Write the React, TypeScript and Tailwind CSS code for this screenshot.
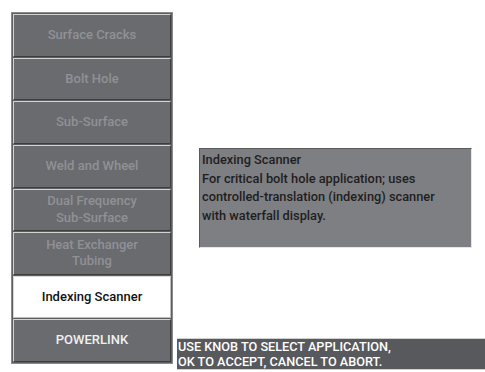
import React from 'react';

interface AppItem {
  label: string[];
  state: 'disabled' | 'selected' | 'enabled';
}

const items: AppItem[] = [
  { label: ['Surface Cracks'], state: 'disabled' },
  { label: ['Bolt Hole'], state: 'disabled' },
  { label: ['Sub-Surface'], state: 'disabled' },
  { label: ['Weld and Wheel'], state: 'disabled' },
  { label: ['Dual Frequency', 'Sub-Surface'], state: 'disabled' },
  { label: ['Heat Exchanger', 'Tubing'], state: 'disabled' },
  { label: ['Indexing Scanner'], state: 'selected' },
  { label: ['POWERLINK'], state: 'enabled' },
];

const font = { fontFamily: 'Roboto, "Liberation Sans", sans-serif' };

const App = () => {
  return (
    <div className="flex w-[485px] h-[372px] bg-white overflow-hidden" style={font}>
      {/* Liste des applications */}
      <div className="ml-[11px] mt-[12px] mb-[8px] w-[162px] flex flex-col gap-[1px] bg-[#5d5e62] border border-[#8a8a8a] p-[1px]">
        {items.map((item, i) => {
          const base = 'flex-1 flex flex-col items-center justify-center border-t border-l leading-[16.5px] text-[13px] font-medium';
          const look =
            item.state === 'selected'
              ? 'bg-white text-[#111] border-[#d8d8d8] border-r border-b border-r-[#bdbdbd] border-b-[#bdbdbd]'
              : item.state === 'enabled'
                ? 'bg-[#6a6b6f] text-[#f0f0f0] border-[#d4d4d4] border-r border-b border-r-[#3e3e3e] border-b-[#3e3e3e]'
                : 'bg-[#6a6b6f] text-[#909195] border-[#d4d4d4] border-r border-b border-r-[#3e3e3e] border-b-[#3e3e3e]';
          return (
            <div key={i} className={`${base} ${look}`}>
              {item.label.map((l) => (
                <span key={l}>{l}</span>
              ))}
            </div>
          );
        })}
      </div>

      {/* Description et consigne */}
      <div className="flex-1 flex flex-col pt-[148px] pb-[2px]">
        <div className="ml-[26px] w-[273px] h-[100px] bg-[#7e7f83] border-t border-l border-[#5a5a5a] border-r border-b border-r-[#e6e6e6] border-b-[#e6e6e6] px-[2px] pt-[2px] text-[12.8px] leading-[18.7px] font-medium text-[#1e1e1e]">
          <div>Indexing Scanner</div>
          <div>For critical bolt hole application; uses</div>
          <div>controlled-translation (indexing) scanner</div>
          <div>with waterfall display.</div>
        </div>
        <div className="mt-auto ml-[4px] h-[32px] bg-[#58595d] border-t border-b border-[#d0d0d0] flex flex-col justify-center pl-[1px] text-[12.7px] leading-[15px] font-medium text-white">
          <div>USE KNOB TO SELECT APPLICATION,</div>
          <div>OK TO ACCEPT, CANCEL TO ABORT.</div>
        </div>
      </div>
    </div>
  );
};

export default App;
